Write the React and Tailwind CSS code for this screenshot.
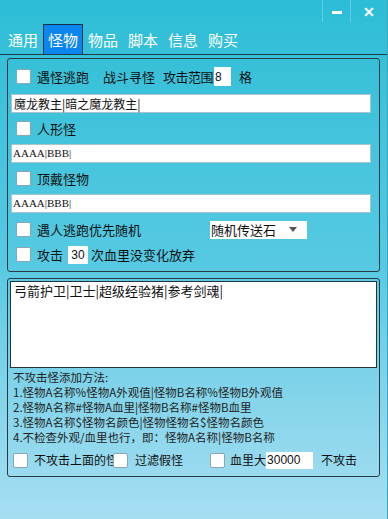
import React from "react";

const Box = () => (
  <span className="inline-block w-[15px] h-[15px] bg-white border border-[#8fa4b0] rounded-[2px] shrink-0" />
);

export default function App() {
  const tabs = ["通用", "怪物", "物品", "脚本", "信息", "购买"];
  return (
    <div
      className="w-[388px] h-[519px] overflow-hidden flex flex-col bg-gradient-to-b from-[#2cbdd6] via-[#55c9e2] to-[#a6def2] border-r border-[#3aa6c0] text-[#111]"
      style={{ fontFamily: '"Noto Sans CJK SC", "Noto Sans", sans-serif' }}
    >
      {/* title bar */}
      <div className="h-[25px] flex justify-end shrink-0">
        <div className="w-[28px] h-[22px] border-l border-[#5fd0e2] flex items-center justify-center">
          <span className="block w-[10px] h-[3px] bg-white mt-[2px]" />
        </div>
        <div className="w-[37px] h-[22px] border-l border-[#5fd0e2] flex items-center justify-center text-white text-[14px] font-bold leading-none">
          ✕
        </div>
      </div>
      {/* tabs */}
      <div className="h-[30px] flex items-end pl-[3px] border-b border-[#1d3f4c] shrink-0">
        {tabs.map((t, i) => (
          <div
            key={t}
            className={
              i === 1
                ? "h-[30px] w-[40px] flex items-center justify-center bg-[#0b86ef] border border-b-0 border-[#13324a] text-white text-[15px] leading-none"
                : "h-[30px] w-[40px] flex items-center justify-center text-white text-[15px] leading-none"
            }
          >
            {t}
          </div>
        ))}
      </div>

      {/* panel 1 */}
      <div className="mt-[3px] mx-[7px] h-[214px] border border-[#2a3a44] rounded-[3px] px-[3px] pt-[7px] flex flex-col shrink-0 text-[13px] leading-none">
        <div className="h-[21px] flex items-center pl-[5px]">
          <Box />
          <span className="ml-[6px]">遇怪逃跑</span>
          <span className="ml-[14px]">战斗寻怪</span>
          <span className="ml-[8px] w-[50px] whitespace-nowrap tracking-[-0.5px]">攻击范围</span>
          <span className="ml-[1px] w-[17px] h-[19px] bg-white flex items-center pl-[1px] text-[12px]" style={{ fontFamily: '"Liberation Sans", sans-serif' }}>8</span>
          <span className="ml-[8px]">格</span>
        </div>
        <div className="mt-[7px] h-[19px] w-[360px] bg-white border border-[#a9c4cf] flex items-center pl-[2px] text-[12px]">
          魔龙教主|暗之魔龙教主|
        </div>
        <div className="mt-[6px] h-[19px] flex items-center pl-[5px]">
          <Box />
          <span className="ml-[6px]">人形怪</span>
        </div>
        <div className="mt-[6px] h-[19px] w-[360px] bg-white border border-[#a9c4cf] flex items-center pl-[1px] text-[11px]" style={{ fontFamily: '"Liberation Serif", serif' }}>
          AAAA|BBB|
        </div>
        <div className="mt-[6px] h-[19px] flex items-center pl-[5px]">
          <Box />
          <span className="ml-[6px]">顶戴怪物</span>
        </div>
        <div className="mt-[6px] h-[19px] w-[360px] bg-white border border-[#a9c4cf] flex items-center pl-[1px] text-[11px]" style={{ fontFamily: '"Liberation Serif", serif' }}>
          AAAA|BBB|
        </div>
        <div className="mt-[6px] h-[21px] flex items-center pl-[5px]">
          <Box />
          <span className="ml-[6px]">遇人逃跑优先随机</span>
          <div className="ml-[69px] w-[97px] h-[18px] bg-white flex items-center pl-[1px] text-[13px]">
            <span>随机传送石</span>
            <span className="ml-auto mr-[10px] w-0 h-0 border-l-[4px] border-r-[4px] border-t-[5px] border-l-transparent border-r-transparent border-t-[#555]" />
          </div>
        </div>
        <div className="mt-[4px] h-[21px] flex items-center pl-[5px]">
          <Box />
          <span className="ml-[6px]">攻击</span>
          <span className="ml-[5px] w-[20px] h-[18px] bg-white flex items-center justify-center text-[12px]" style={{ fontFamily: '"Liberation Sans", sans-serif' }}>30</span>
          <span className="ml-[3px]">次血里没变化放弃</span>
        </div>
      </div>

      {/* panel 2 */}
      <div className="mt-[6px] mx-[7px] h-[199px] border border-[#2a3a44] rounded-[3px] px-[2px] pt-[2px] flex flex-col shrink-0">
        <div className="h-[87px] w-[367px] bg-white border border-[#24323c] px-[3px] pt-[1px] text-[13px] leading-[16px]">
          弓箭护卫|卫士|超级经验猪|参考剑魂|
        </div>
        <div className="mt-[2px] pl-[3px] text-[11.5px] leading-[15px] text-[#222]" style={{ fontFamily: '"Noto Sans CJK SC", sans-serif' }}>
          <div>不攻击怪添加方法:</div>
          <div>1.怪物A名称%怪物A外观值|怪物B名称%怪物B外观值</div>
          <div>2.怪物A名称#怪物A血里|怪物B名称#怪物B血里</div>
          <div>3.怪物A名称$怪物名颜色|怪物怪物名$怪物名颜色</div>
          <div>4.不检查外观/血里也行，即：怪物A名称|怪物B名称</div>
        </div>
        <div className="mt-[5px] h-[20px] flex items-center pl-[3px] text-[12px] leading-none">
          <Box />
          <span className="ml-[6px] w-[79px] overflow-hidden whitespace-nowrap">不攻击上面的怪</span>
          <Box />
          <span className="ml-[7px]">过滤假怪</span>
          <span className="ml-[27px] flex"><Box /></span>
          <span className="ml-[5px]">血里大</span>
          <span className="w-[47px] h-[17px] bg-white flex items-center pl-[1px] text-[12px]" style={{ fontFamily: '"Liberation Sans", sans-serif' }}>30000</span>
          <span className="ml-[8px]">不攻击</span>
        </div>
      </div>
    </div>
  );
}
